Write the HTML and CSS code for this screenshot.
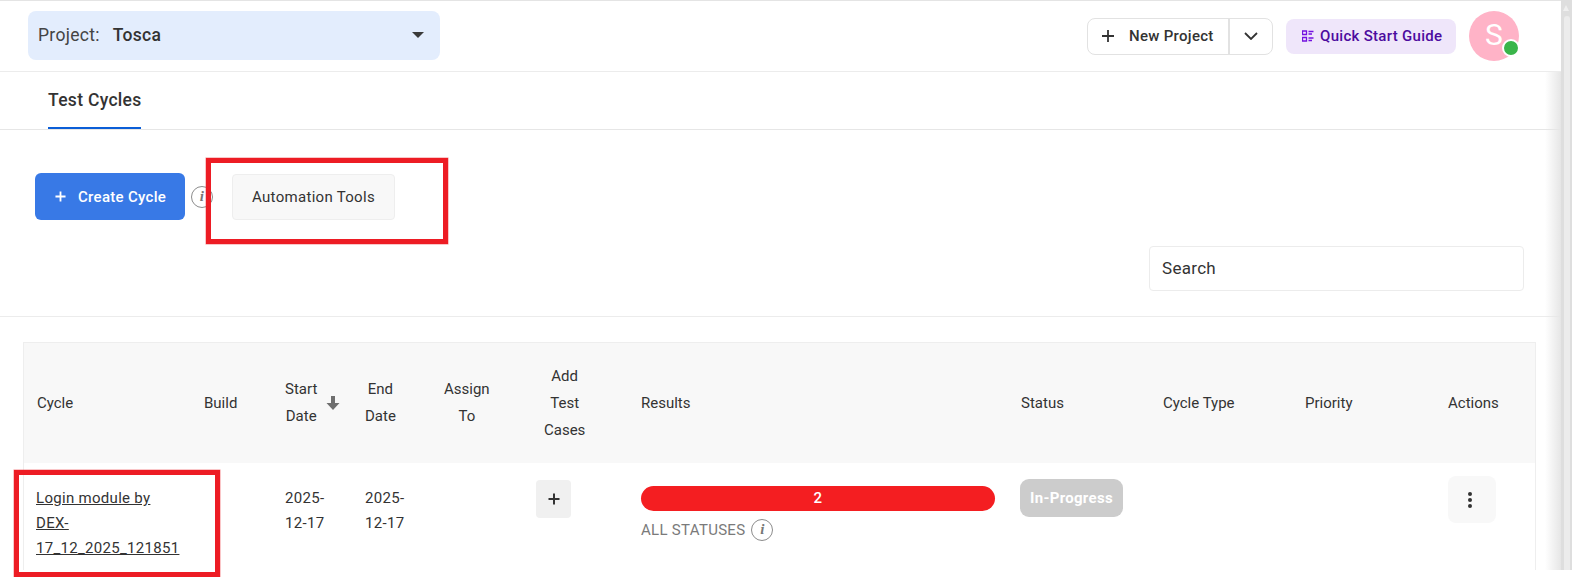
FILE: index.html
```html
<!DOCTYPE html>
<html>
	<head>
		<meta charset="utf-8" />
		<title>Test Cycles</title>
		<link rel="stylesheet" href="styles.css">
	</head>
	<body>
		<div class="window">
			<div class="main">
				<header class="topbar">
					<div class="project-select">
						<span class="project-label">Project:</span>
						<span class="project-name">Tosca</span>
						<span class="caret"></span>
					</div>
					<div class="topbar-right">
						<div class="new-project">
							<div class="new-project-main">
								<svg class="icon-plus" viewBox="0 0 14 14"><path d="M7 1v12M1 7h12"/></svg>
								<span>New Project</span>
							</div>
							<div class="new-project-more">
								<svg class="icon-chevron" viewBox="0 0 14 8"><path d="M1 1l6 6 6-6"/></svg>
							</div>
						</div>
						<div class="quick-start">
							<svg class="icon-guide" viewBox="0 0 12 12"><path d="M0.5 1h4v3.500h-4zM0.500 7.500h4v3.500h-4z"/><path d="M6.500 1.500h5M6.500 4h3.500M6.500 8h5M6.500 10.500h3.500"/></svg>
							<span>Quick Start Guide</span>
						</div>
						<div class="avatar">S<span class="avatar-dot"></span></div>
					</div>
				</header>

				<nav class="tabs">
					<div class="tab-active">Test Cycles</div>
				</nav>

				<div class="content">
					<div class="toolbar">
						<div class="btn-create">
							<svg class="icon-plus-white" viewBox="0 0 12 12"><path d="M6 0.500v11M0.500 6h11"/></svg>
							<span>Create Cycle</span>
						</div>
						<span class="info-icon">i</span>
						<div class="btn-tools">Automation Tools</div>
					</div>
					<div class="search-row">
						<div class="search-box">Search</div>
					</div>

					<div class="table-wrap">
						<table class="cycles">
							<colgroup>
								<col class="c-cycle"><col class="c-build"><col class="c-start"><col class="c-end"><col class="c-assign">
								<col class="c-add"><col class="c-results"><col class="c-status"><col class="c-type"><col class="c-priority"><col class="c-actions">
							</colgroup>
							<thead>
								<tr>
									<th>Cycle</th>
									<th>Build</th>
									<th><span class="th-sort"><span class="th-stack">Start<br>Date</span><svg class="icon-down" viewBox="0 0 14 16"><path d="M5 1h4v7h4.500L7 15 0.500 8H5z"/></svg></span></th>
									<th><span class="th-stack">End<br>Date</span></th>
									<th><span class="th-stack">Assign<br>To</span></th>
									<th><span class="th-stack">Add<br>Test<br>Cases</span></th>
									<th>Results</th>
									<th>Status</th>
									<th>Cycle Type</th>
									<th>Priority</th>
									<th>Actions</th>
								</tr>
							</thead>
							<tbody>
								<tr>
									<td class="td-cycle"><a class="cycle-link">Login module by DEX-17_12_2025_121851</a></td>
									<td></td>
									<td>2025-<br>12-17</td>
									<td>2025-<br>12-17</td>
									<td></td>
									<td class="td-add"><div class="btn-add"><svg class="icon-plus-small" viewBox="0 0 12 12"><path d="M6 0.500v11M0.500 6h11"/></svg></div></td>
									<td class="td-results">
										<div class="result-bar">2</div>
										<div class="result-note">ALL STATUSES <span class="info-icon">i</span></div>
									</td>
									<td class="td-status"><span class="status-pill">In-Progress</span></td>
									<td></td>
									<td></td>
									<td class="td-actions"><div class="btn-menu"><span></span><span></span><span></span></div></td>
								</tr>
							</tbody>
						</table>
					</div>
				</div>
				<div class="edge-shadow"></div>
			</div>
			<div class="scrollbar">
				<div class="scroll-arrow"></div>
				<div class="scroll-thumb"></div>
			</div>
		</div>

		<!-- annotation boxes drawn over the shot -->
		<div class="mark mark-tools"></div>
		<div class="mark mark-link"></div>
	</body>
</html>
```

FILE: styles.css
```css
html, body{
	margin: 0;
	height: 577px;
	overflow: hidden;
	background: #ffffff;
}
body{
	position: relative;
	font-family: Roboto, "Liberation Sans", sans-serif;
	font-size: 15px;
	letter-spacing: 0.3px;
	color: #333333;
}
.window{
	display: flex;
	height: 570px;
	overflow: hidden;
}
.main{
	position: relative;
	width: 1561px;
	flex: none;
	border-top: 1px solid #e4e4e4;
	box-sizing: border-box;
	display: flex;
	flex-direction: column;
}

/* top bar */
.topbar{
	flex: none;
	height: 71px;
	box-sizing: border-box;
	border-bottom: 1px solid #ececec;
	padding: 0 42px 0 28px;
	display: flex;
	justify-content: space-between;
	align-items: center;
}
.project-select{
	width: 412px;
	height: 49px;
	margin-top: -1px;
	box-sizing: border-box;
	padding: 0 16px 2px 10px;
	background: #e3edfd;
	border-radius: 8px;
	display: flex;
	align-items: center;
	font-size: 17.500px;
}
.project-label{
	color: #444444;
	margin-right: 13px;
}
.project-name{
	font-weight: 500;
	color: #333333;
}
.caret{
	margin-left: auto;
	width: 0;
	height: 0;
	border-top: 6px solid #3a3a3a;
	border-left: 6.500px solid transparent;
	border-right: 6.500px solid transparent;
}
.topbar-right{
	display: flex;
	align-items: center;
}
.new-project{
	width: 186px;
	height: 37px;
	box-sizing: border-box;
	border: 1px solid #e2e2e2;
	border-radius: 8px;
	display: flex;
	font-weight: 500;
	font-size: 15px;
	color: #333333;
}
.new-project-main{
	width: 142px;
	flex: none;
	box-sizing: border-box;
	padding-left: 13px;
	border-right: 2px solid #e2e2e2;
	display: flex;
	align-items: center;
	gap: 14px;
}
.new-project-more{
	flex: 1;
	display: flex;
	align-items: center;
	justify-content: center;
}
.icon-plus{
	width: 14px;
	height: 14px;
	fill: none;
	stroke: #333333;
	stroke-width: 1.800;
}
.icon-chevron{
	width: 14px;
	height: 8px;
	fill: none;
	stroke: #333333;
	stroke-width: 1.800;
}
.quick-start{
	margin-left: 13px;
	width: 170px;
	height: 35px;
	box-sizing: border-box;
	padding-left: 16px;
	background: #efe6fa;
	border-radius: 8px;
	display: flex;
	align-items: center;
	gap: 6px;
	font-weight: 500;
	font-size: 15px;
	color: #4c0b9f;
}
.icon-guide{
	width: 12px;
	height: 12px;
	fill: none;
	stroke: #7312e0;
	stroke-width: 1.300;
}
.avatar{
	position: relative;
	margin-left: 13px;
	width: 50px;
	height: 50px;
	border-radius: 50%;
	background: #ffb3c7;
	color: #ffffff;
	font-size: 30px;
	line-height: 48px;
	text-align: center;
}
.avatar-dot{
	position: absolute;
	right: -1px;
	bottom: 4px;
	width: 14px;
	height: 14px;
	border: 2px solid #ffffff;
	border-radius: 50%;
	background: #3ab54a;
}

/* tabs */
.tabs{
	flex: none;
	height: 58px;
	box-sizing: border-box;
	border-bottom: 1px solid #e6e6e6;
	padding-left: 48px;
}
.tab-active{
	display: inline-block;
	width: 93px;
	height: 57px;
	box-sizing: border-box;
	border-bottom: 2px solid #0b5ed7;
	line-height: 57px;
	font-size: 17.500px;
	font-weight: 500;
	white-space: nowrap;
}

/* page body */
.content{
	flex: 1;
	min-height: 0;
	display: flex;
	flex-direction: column;
	overflow: hidden;
}
.toolbar{
	display: flex;
	align-items: center;
	margin: 43px 0 0 35px;
	height: 47px;
}
.btn-create{
	width: 150px;
	height: 47px;
	box-sizing: border-box;
	padding-left: 20px;
	background: #3879e6;
	border-radius: 6px;
	display: flex;
	align-items: center;
	gap: 12px;
	color: #ffffff;
	font-weight: 500;
}
.icon-plus-white{
	width: 11px;
	height: 11px;
	fill: none;
	stroke: #ffffff;
	stroke-width: 2;
}
.info-icon{
	display: inline-block;
	width: 22px;
	height: 22px;
	box-sizing: border-box;
	border: 1.500px solid #8c8c8c;
	border-radius: 50%;
	text-align: center;
	font-family: "Liberation Serif", serif;
	font-style: italic;
	font-weight: bold;
	font-size: 15px;
	line-height: 19px;
	color: #777777;
}
.toolbar .info-icon{
	margin-left: 6px;
}
.btn-tools{
	margin-left: 19px;
	width: 163px;
	height: 46px;
	box-sizing: border-box;
	border: 1px solid #eeeeee;
	border-radius: 4px;
	background: #f8f8f8;
	line-height: 44px;
	text-align: center;
	color: #333333;
}
.search-row{
	display: flex;
	justify-content: flex-end;
	padding: 26px 37px 25px 0;
	border-bottom: 1px solid #ececec;
}
.search-box{
	width: 375px;
	height: 45px;
	box-sizing: border-box;
	border: 1px solid #ececec;
	border-radius: 4px;
	padding-left: 12px;
	line-height: 43px;
	font-size: 17px;
	color: #333333;
}

/* table */
.table-wrap{
	flex: 1;
	margin: 25px 25px 0 23px;
	border: 1px solid #eeeeee;
	border-bottom: none;
}
.cycles{
	width: 100%;
	table-layout: fixed;
	border-collapse: collapse;
}
.c-cycle{ width: 167px; }
.c-build{ width: 81px; }
.c-start{ width: 80px; }
.c-end{ width: 79px; }
.c-assign{ width: 100px; }
.c-add{ width: 97px; }
.c-results{ width: 380px; }
.c-status{ width: 142px; }
.c-type{ width: 142px; }
.c-priority{ width: 143px; }
.c-actions{ width: 100px; }
.cycles th{
	height: 120px;
	padding: 0 13px;
	background: #f8f8f8;
	font-weight: 400;
	letter-spacing: 0;
	text-align: left;
	line-height: 27px;
	color: #333333;
}
.th-stack{
	display: inline-block;
	text-align: center;
	vertical-align: middle;
}
.th-sort{
	display: inline-flex;
	align-items: center;
	gap: 9px;
	white-space: nowrap;
}
.icon-down{
	width: 14px;
	height: 16px;
	fill: #6f6f6f;
}
.cycles td{
	padding: 23px 13px 0;
	vertical-align: top;
	line-height: 25px;
	color: #333333;
}
.cycles .td-cycle{
	padding-left: 12px;
}
.cycle-link{
	text-decoration: underline;
	word-break: normal;
}
.cycles .td-add{
	padding: 17px 0 0 5px;
}
.btn-add{
	width: 35px;
	height: 38px;
	border-radius: 4px;
	background: #f0f0f0;
	display: flex;
	align-items: center;
	justify-content: center;
}
.icon-plus-small{
	width: 12px;
	height: 12px;
	fill: none;
	stroke: #333333;
	stroke-width: 2;
}
.cycles .td-results{
	padding: 23px 13px 0;
}
.result-bar{
	width: 354px;
	height: 25px;
	border-radius: 13px;
	background: #f41e21;
	color: #ffffff;
	text-align: center;
	font-weight: 500;
	line-height: 25px;
}
.result-note{
	margin-top: 7px;
	display: flex;
	align-items: center;
	gap: 6px;
	color: #7a7a7a;
	line-height: 24px;
}
.cycles .td-status{
	padding: 16px 0 0 12px;
}
.status-pill{
	display: inline-block;
	width: 103px;
	height: 38px;
	border-radius: 9px;
	background: #cccccc;
	color: #ffffff;
	text-align: center;
	font-weight: 700;
	line-height: 38px;
}
.cycles .td-actions{
	padding: 13px 0 0 13px;
}
.btn-menu{
	width: 48px;
	height: 47px;
	border-radius: 8px;
	background: #f8f8f8;
	display: flex;
	flex-direction: column;
	align-items: center;
	justify-content: center;
	gap: 2px;
	box-sizing: border-box;
	padding-right: 5px;
}
.btn-menu span{
	width: 4px;
	height: 4px;
	border-radius: 50%;
	background: #333333;
}

/* soft shadow next to the scrollbar */
.edge-shadow{
	position: absolute;
	top: 71px;
	bottom: 0;
	right: 0;
	width: 16px;
	background: linear-gradient(to right, rgba(225, 225, 225, 0), #e6e6e6);
}

/* browser scrollbar */
.scrollbar{
	position: relative;
	width: 11px;
	flex: none;
	background: #dedede;
}
.scroll-arrow{
	position: absolute;
	top: 5px;
	left: 2px;
	width: 0;
	height: 0;
	border-bottom: 6px solid #efefef;
	border-left: 3.500px solid transparent;
	border-right: 3.500px solid transparent;
}
.scroll-thumb{
	position: absolute;
	top: 16px;
	bottom: 0;
	left: 3px;
	width: 6px;
	background: #ececec;
	border-radius: 3px 3px 0 0;
}

/* red annotation boxes */
.mark{
	position: absolute;
	box-sizing: border-box;
	border: 5px solid #ed1c24;
	box-shadow: 0 0 0 0.500px rgba(237, 28, 36, 0.5);
}
.mark-tools{
	left: 206px;
	top: 158px;
	width: 242px;
	height: 86px;
}
.mark-link{
	left: 14px;
	top: 470px;
	width: 206px;
	height: 107px;
}
```
